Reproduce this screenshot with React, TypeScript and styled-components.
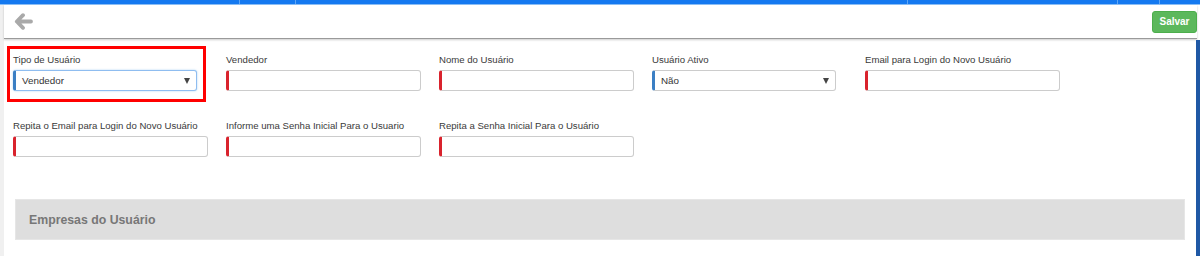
import React from 'react';
import styled, { createGlobalStyle } from 'styled-components';

const GlobalStyle = createGlobalStyle`
  * { box-sizing: border-box; }
  html, body {
    margin: 0;
    padding: 0;
    background: #ffffff;
    font-family: 'Liberation Sans', Arial, sans-serif;
    color: #333333;
    overflow: hidden;
  }
`;

type Field = {
  label: string;
  kind: 'input' | 'select';
  value?: string;
  focused?: boolean;
  highlighted?: boolean;
};

const rows: Field[][] = [
  [
    { label: 'Tipo de Usuário', kind: 'select', value: 'Vendedor', focused: true, highlighted: true },
    { label: 'Vendedor', kind: 'input' },
    { label: 'Nome do Usuário', kind: 'input' },
    { label: 'Usuário Ativo', kind: 'select', value: 'Não' },
    { label: 'Email para Login do Novo Usuário', kind: 'input' },
  ],
  [
    { label: 'Repita o Email para Login do Novo Usuário', kind: 'input' },
    { label: 'Informe uma Senha Inicial Para o Usuario', kind: 'input' },
    { label: 'Repita a Senha Inicial Para o Usuário', kind: 'input' },
  ],
];

// widths of the tab segments in the top strip
const tabWidths = [240, 56, 612, 210, 42];

const Shell = styled.div`
  display: flex;
  flex-direction: column;
  width: 1200px;
  height: 256px;
`;

const TopBar = styled.div`
  display: flex;
  height: 5px;
  background: #1479f0;
  border-bottom: 1px solid #8cc0f7;
`;

const TopTab = styled.div<{ $w: number }>`
  width: ${p => p.$w}px;
  border-right: 1px solid #5fa6f5;
`;

const Body = styled.div`
  display: flex;
  flex: 1;
`;

const LeftRail = styled.div`
  width: 4px;
  background: #f0f0f0;
`;

const Main = styled.div`
  flex: 1;
  display: flex;
  flex-direction: column;
`;

const Header = styled.div`
  height: 34px;
  display: flex;
  align-items: center;
  justify-content: space-between;
  padding: 0 3px 0 10px;
  border-bottom: 1px solid #9a9a9a;
  box-shadow: 0 1px 2px rgba(0, 0, 0, 0.2);
  margin-right: 3px;
`;

const BackButton = styled.button`
  border: 0;
  background: none;
  padding: 0;
  display: flex;
  cursor: pointer;
`;

const SaveButton = styled.button`
  height: 22px;
  width: 45px;
  margin-right: -3px;
  background: #5cb85c;
  border: 1px solid #4cae4c;
  border-radius: 3px;
  color: #ffffff;
  font-family: 'Liberation Sans', Arial, sans-serif;
  font-weight: bold;
  font-size: 10px;
  padding: 0;
`;

const ContentRow = styled.div`
  flex: 1;
  display: flex;
`;

const Content = styled.div`
  flex: 1;
  padding: 14px 11px 0 9px;
  display: flex;
  flex-direction: column;
  gap: 28px;
`;

const RightRail = styled.div`
  width: 4px;
  margin-top: 1px;
  background: #1f58a5;
`;

const FormRow = styled.div`
  display: grid;
  grid-template-columns: repeat(5, 195px);
  column-gap: 18px;
`;

const FieldBox = styled.div`
  position: relative;
  display: flex;
  flex-direction: column;
`;

const Label = styled.label`
  font-size: 9.6px;
  line-height: 14px;
  height: 14px;
  color: #3a3a3a;
  margin-bottom: 3px;
  white-space: nowrap;
`;

const TextInput = styled.div`
  height: 21px;
  width: 195px;
  border: 1px solid #cccccc;
  border-left: 3px solid #d9232d;
  border-radius: 3px;
  background: #ffffff;
`;

const SelectBox = styled.div<{ $focused?: boolean }>`
  height: 21px;
  width: 184px;
  display: flex;
  align-items: center;
  justify-content: space-between;
  padding: 0 6px 0 6px;
  border: 1px solid ${p => (p.$focused ? '#8fbdf0' : '#cccccc')};
  border-left: 3px solid #3b7fc4;
  border-radius: 3px;
  background: #ffffff;
  box-shadow: ${p => (p.$focused ? '0 0 2px rgba(102, 175, 233, 0.6)' : 'none')};
  font-size: 9.8px;
  color: #333333;
`;

const Caret = styled.span`
  width: 0;
  height: 0;
  border-left: 3.5px solid transparent;
  border-right: 3.5px solid transparent;
  border-top: 6px solid #444444;
`;

const Highlight = styled.div`
  position: absolute;
  top: -7px;
  left: -6px;
  width: 199px;
  height: 56px;
  border: 3px solid #ff0000;
  pointer-events: none;
`;

const Panel = styled.div`
  margin: 14px 0 0 2px;
  height: 41px;
  display: flex;
  align-items: center;
  padding-left: 13px;
  background: #dedede;
  border: 1px solid #e6e6e6;
  font-size: 12.3px;
  font-weight: bold;
  color: #777777;
`;

const BackArrow = () => (
  <svg width="19" height="17" viewBox="0 0 19 17">
    <path
      d="M9 2.2 L2.8 8.5 L9 14.8 M3.5 8.5 H17"
      fill="none"
      stroke="#a9a9a9"
      strokeWidth="3.8"
      strokeLinecap="round"
      strokeLinejoin="round"
    />
  </svg>
);

const FormField: React.FC<{ field: Field }> = ({ field }) => (
  <FieldBox>
    <Label>{field.label}</Label>
    {field.kind === 'select' ? (
      <SelectBox $focused={field.focused}>
        <span>{field.value}</span>
        <Caret />
      </SelectBox>
    ) : (
      <TextInput />
    )}
    {field.highlighted && <Highlight />}
  </FieldBox>
);

const App: React.FC = () => (
  <>
    <GlobalStyle />
    <Shell>
      <TopBar>
        {tabWidths.map((w, i) => (
          <TopTab key={i} $w={w} />
        ))}
      </TopBar>
      <Body>
        <LeftRail />
        <Main>
          <Header>
            <BackButton>
              <BackArrow />
            </BackButton>
            <SaveButton>Salvar</SaveButton>
          </Header>
          <ContentRow>
            <Content>
              {rows.map((row, i) => (
                <FormRow key={i}>
                  {row.map(f => (
                    <FormField key={f.label} field={f} />
                  ))}
                </FormRow>
              ))}
              <Panel>Empresas do Usuário</Panel>
            </Content>
            <RightRail />
          </ContentRow>
        </Main>
      </Body>
    </Shell>
  </>
);

export default App;
